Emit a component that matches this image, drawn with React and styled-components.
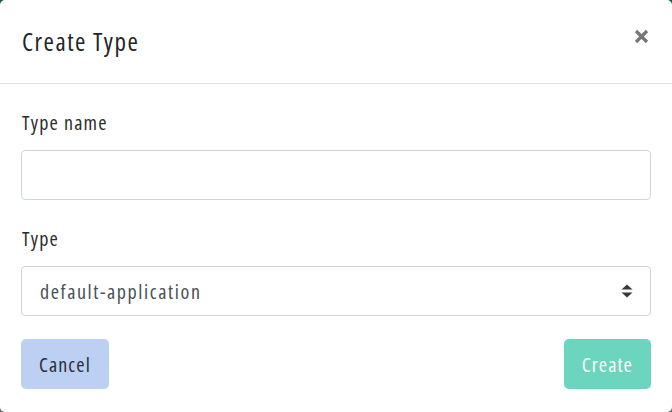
import React, { useState } from 'react'
import styled, { createGlobalStyle } from 'styled-components'

const GlobalStyle = createGlobalStyle`
  html, body {
    margin: 0;
    padding: 0;
    width: 672px;
    height: 412px;
    overflow: hidden;
    background: linear-gradient(180deg, #0d5b4c 0%, #0d5b4c 50%, #6a6a6a 50%, #6a6a6a 100%);
  }
  * {
    box-sizing: border-box;
  }
`

const font = `"Open Sans", "DejaVu Sans Condensed", sans-serif`
const stretch = '75%'

const Modal = styled.div`
  width: 672px;
  height: 412px;
  background: #fff;
  border-radius: 5px;
  display: flex;
  flex-direction: column;
  font-family: ${font};
  font-stretch: ${stretch};
  overflow: hidden;
`

const Header = styled.div`
  height: 85px;
  display: flex;
  align-items: center;
  justify-content: space-between;
  padding: 0 22px 0 22px;
  border-bottom: 1px solid #dee2e6;
`

const Title = styled.h5`
  margin: 0;
  font-size: 25px;
  font-weight: 400;
  letter-spacing: 1.5px;
  color: #212529;
  padding-bottom: 2px;
`

const Close = styled.button`
  border: 0;
  background: none;
  padding: 0;
  width: 16px;
  height: 16px;
  display: flex;
  align-items: center;
  justify-content: center;
  cursor: pointer;
  margin: 0 1px 10px 0;
`

const Body = styled.div`
  flex: 1;
  padding: 25px 21px 23px;
  display: flex;
  flex-direction: column;
`

const Group = styled.div`
  display: flex;
  flex-direction: column;
  margin-bottom: ${p => p.$last ? 23 : 25}px;
`

const Label = styled.label`
  font-size: 20px;
  line-height: 28px;
  letter-spacing: 1.2px;
  color: #2d2d2d;
  padding-left: 1px;
  margin-bottom: 13px;
`

const Input = styled.input`
  height: 50px;
  width: 100%;
  border: 1px solid #ced4da;
  border-radius: 4px;
  padding: 0 18px;
  font-family: ${font};
  font-stretch: ${stretch};
  font-size: 20px;
  letter-spacing: 1.5px;
  color: #495057;
  outline: none;
`

const SelectWrap = styled.div`
  position: relative;
  height: 50px;
`

const Select = styled.select`
  appearance: none;
  -webkit-appearance: none;
  height: 50px;
  width: 100%;
  border: 1px solid #ced4da;
  border-radius: 4px;
  padding: 0 40px 0 18px;
  background: #fff;
  font-family: ${font};
  font-stretch: ${stretch};
  font-size: 20px;
  letter-spacing: 1.6px;
  color: #495057;
  outline: none;
`

const Arrows = styled.svg`
  position: absolute;
  right: 18px;
  top: 18px;
  pointer-events: none;
`

const Footer = styled.div`
  display: flex;
  justify-content: space-between;
`

const Button = styled.button`
  height: 50px;
  padding: 0 18px;
  border: 0;
  border-radius: 5px;
  font-family: ${font};
  font-stretch: ${stretch};
  font-size: 20px;
  letter-spacing: 1.1px;
  background: ${p => p.$primary ? '#6cd5bd' : '#bcd0f4'};
  color: ${p => p.$primary ? '#fff' : '#2a2f36'};
  cursor: pointer;
`

export default function App() {
  const [name, setName] = useState('')
  const [type, setType] = useState('default-application')

  return (
    <>
      <GlobalStyle />
      <Modal>
        <Header>
          <Title>Create Type</Title>
          <Close aria-label="Close">
            <svg width="15" height="15" viewBox="0 0 15 15">
              <path d="M2 2 L13 13 M13 2 L2 13" stroke="#777" strokeWidth="3.2" strokeLinecap="butt" />
            </svg>
          </Close>
        </Header>
        <Body>
          <Group>
            <Label>Type name</Label>
            <Input value={name} onChange={e => setName(e.target.value)} />
          </Group>
          <Group $last>
            <Label>Type</Label>
            <SelectWrap>
              <Select value={type} onChange={e => setType(e.target.value)}>
                <option value="default-application">default-application</option>
              </Select>
              <Arrows width="12" height="14" viewBox="0 0 12 14">
                <path d="M6 0.5 L11.5 5.5 L0.5 5.5 Z" fill="#343a40" />
                <path d="M6 13.5 L11.5 8.5 L0.5 8.5 Z" fill="#343a40" />
              </Arrows>
            </SelectWrap>
          </Group>
          <Footer>
            <Button>Cancel</Button>
            <Button $primary>Create</Button>
          </Footer>
        </Body>
      </Modal>
    </>
  )
}
